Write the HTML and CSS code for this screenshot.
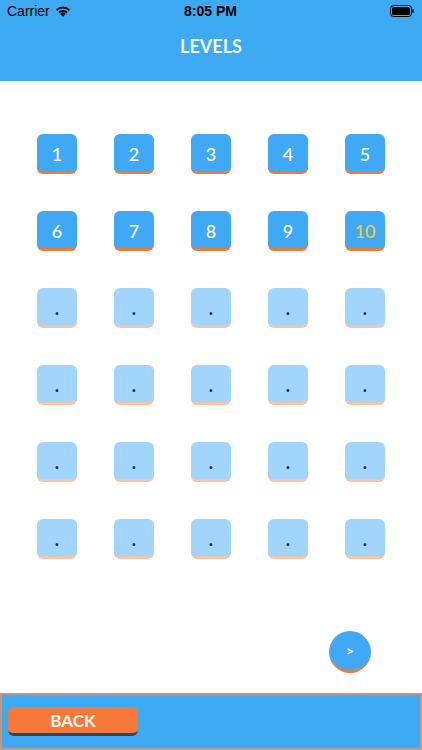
FILE: index.html
```html
<!DOCTYPE html>
<html lang="en">
<head>
    <meta charset="UTF-8">
    <meta name="viewport" content="width=device-width, initial-scale=1.0">
    <title>Levels</title>
    <link rel="stylesheet" href="styles.css">
</head>
<body>
    <div class="top">
        <div class="status-bar">
            <div class="carrier">
                Carrier
                <svg class="wifi" width="16" height="12" viewBox="0 0 16 12">
                    <path d="M8 11.8 L5.3 8.9 A3.8 3.8 0 0 1 10.7 8.9 Z" fill="#000"/>
                    <path d="M3.3 6.9 A6.6 6.6 0 0 1 12.7 6.9 L11.3 8.3 A4.6 4.6 0 0 0 4.7 8.3 Z" fill="#000"/>
                    <path d="M0.9 4.5 A10 10 0 0 1 15.1 4.5 L13.7 5.9 A8 8 0 0 0 2.3 5.9 Z" fill="#000"/>
                </svg>
            </div>
            <div class="time">8:05 PM</div>
            <div class="battery">
                <svg width="24" height="12" viewBox="0 0 24 12">
                    <rect x="0.5" y="0.5" width="21" height="11" rx="3" fill="none" stroke="#000" stroke-width="1"/>
                    <rect x="2" y="2" width="18" height="8" rx="1.5" fill="#000"/>
                    <rect x="22.3" y="4" width="1.5" height="4" rx="0.7" fill="#000"/>
                </svg>
            </div>
        </div>
        <h1>LEVELS</h1>
    </div>

    <div class="levels">
        <div class="level">1</div>
        <div class="level">2</div>
        <div class="level">3</div>
        <div class="level">4</div>
        <div class="level">5</div>
        <div class="level">6</div>
        <div class="level">7</div>
        <div class="level">8</div>
        <div class="level">9</div>
        <div class="level current">10</div>
        <div class="level locked">.</div>
        <div class="level locked">.</div>
        <div class="level locked">.</div>
        <div class="level locked">.</div>
        <div class="level locked">.</div>
        <div class="level locked">.</div>
        <div class="level locked">.</div>
        <div class="level locked">.</div>
        <div class="level locked">.</div>
        <div class="level locked">.</div>
        <div class="level locked">.</div>
        <div class="level locked">.</div>
        <div class="level locked">.</div>
        <div class="level locked">.</div>
        <div class="level locked">.</div>
        <div class="level locked">.</div>
        <div class="level locked">.</div>
        <div class="level locked">.</div>
        <div class="level locked">.</div>
        <div class="level locked">.</div>
    </div>

    <div class="pager">
        <button class="next">&gt;</button>
    </div>

    <div class="bottom">
        <button class="back">BACK</button>
    </div>
</body>
</html>
```

FILE: styles.css
```css
* {
    box-sizing: border-box;
}
body {
    margin: 0;
    height: 750px;
    display: flex;
    flex-direction: column;
    background-color: #fff;
    font-family: Lato, 'Liberation Sans', sans-serif;
}
.top {
    background-color: #3eaaf4;
    height: 81px;
}
.status-bar {
    height: 22px;
    display: flex;
    align-items: center;
    justify-content: space-between;
    padding: 0 8px 0 7px;
    font-family: 'Liberation Sans', Arial, sans-serif;
    font-size: 14px;
    color: #000;
}
.carrier {
    width: 120px;
    display: flex;
    align-items: center;
    gap: 5px;
}
.time {
    font-weight: bold;
}
.battery {
    width: 120px;
    display: flex;
    justify-content: flex-end;
}
h1 {
    margin: 0;
    padding-top: 13px;
    text-align: center;
    color: #f2f8fe;
    font-size: 18px;
    font-weight: bold;
}
.levels {
    display: grid;
    grid-template-columns: repeat(5, 40px);
    grid-auto-rows: 40px;
    column-gap: 37px;
    row-gap: 37px;
    justify-content: center;
    padding-top: 53px;
}
.level {
    background-color: #3fa9f5;
    border-bottom: 3px solid #f07a3c;
    border-radius: 6px;
    color: #fff;
    font-size: 18px;
    font-weight: 500;
    display: flex;
    align-items: center;
    justify-content: center;
    padding-top: 2px;
}
.level.current {
    color: #f3cc3b;
}
.level.locked {
    background-color: #a2d5fb;
    border-bottom-color: #f7c4a8;
    color: #17304f;
    font-weight: bold;
}
.pager {
    display: flex;
    justify-content: flex-end;
    padding: 72px 51px 0 0;
}
.next {
    width: 42px;
    height: 42px;
    border-radius: 50%;
    border: none;
    border-bottom: 3px solid #f07a3c;
    background-color: #3fa9f5;
    color: #fff;
    font-family: Lato, 'Liberation Sans', sans-serif;
    font-size: 14px;
    font-weight: bold;
    padding: 0;
}
.bottom {
    margin-top: auto;
    height: 57px;
    background-color: #3eaaf4;
    border: 2px solid #c7977d;
    padding: 12px 0 0 6px;
}
.back {
    width: 130px;
    height: 29px;
    border: none;
    border-bottom: 3px solid #294766;
    border-radius: 6px;
    background-color: #f7793a;
    color: #fff5ee;
    font-family: Lato, 'Liberation Sans', sans-serif;
    font-size: 17px;
    font-weight: bold;
    padding: 0;
}
```
